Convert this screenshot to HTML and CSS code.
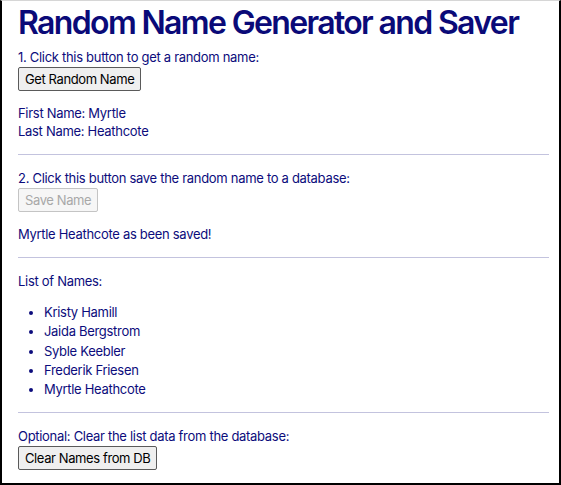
FILE: index.html
```html
<!DOCTYPE html>
<html lang="en">
<head>
<meta charset="utf-8">
<title>Random Name Generator and Saver</title>
<link rel="stylesheet" href="styles.css">
</head>
<body>
<div class="frame">
  <h1 class="title">Random Name Generator and Saver</h1>
  <section class="step">
    <p class="label">1. Click this button to get a random name:</p>
    <button class="btn" type="button">Get Random Name</button>
    <div class="result">
      <p class="line">First Name: Myrtle</p>
      <p class="line">Last Name: Heathcote</p>
    </div>
  </section>
  <hr class="rule">
  <section class="step">
    <p class="label">2. Click this button save the random name to a database:</p>
    <button class="btn" type="button" disabled>Save Name</button>
    <div class="result">
      <p class="line">Myrtle Heathcote as been saved!</p>
    </div>
  </section>
  <hr class="rule">
  <section class="step">
    <p class="label">List of Names:</p>
    <ul class="names">
      <li>Kristy Hamill</li>
      <li>Jaida Bergstrom</li>
      <li>Syble Keebler</li>
      <li>Frederik Friesen</li>
      <li>Myrtle Heathcote</li>
    </ul>
  </section>
  <hr class="rule rule-last">
  <section class="step">
    <p class="label">Optional: Clear the list data from the database:</p>
    <button class="btn" type="button">Clear Names from DB</button>
  </section>
</div>
</body>
</html>
```
FILE: styles.css
```css
html, body {
  margin: 0;
  padding: 0;
  background: #ffffff;
}
body {
  font-family: Inter, "Noto Sans", "Liberation Sans", sans-serif;
  color: #0c0c7c;
  font-size: 13px;
  line-height: 18px;
  letter-spacing: -0.3px;
}
.frame {
  box-sizing: border-box;
  width: 561px;
  height: 485px;
  border-top: 1px solid #d6d6d6;
  border-left: 2px solid #000;
  border-right: 2px solid #000;
  border-bottom: 2px solid #000;
  padding: 0 10px 0 16px;
  overflow: hidden;
}
.title {
  margin: 0 0 3px;
  font-size: 32px;
  line-height: 44px;
  font-weight: 600;
  color: #0a0a78;
  letter-spacing: -1.65px;
  white-space: nowrap;
}
.step {
  display: flex;
  flex-direction: column;
  align-items: flex-start;
}
.label, .line {
  margin: 0;
}
.btn {
  font-family: Inter, "Noto Sans", "Liberation Sans", sans-serif;
  font-size: 13px;
  letter-spacing: -0.4px;
  height: 24px;
  margin-top: 1px;
  padding: 0 6px;
  border: 1px solid #5a5a5a;
  border-radius: 2px;
  background: #efefef;
  color: #000;
}
.btn:disabled {
  color: #a8a8a8;
  border-color: #c4c4c4;
  background: #f6f6f6;
}
.result {
  margin-top: 13px;
}
.rule {
  margin: 14px 0;
  border: 0;
  border-top: 1px solid #c3c3de;
  height: 0;
}
.rule-last {
  margin-top: 13px;
}
.names {
  margin: 13px 0 0;
  padding-left: 26px;
}
.names li {
  line-height: 19.3px;
}
```
